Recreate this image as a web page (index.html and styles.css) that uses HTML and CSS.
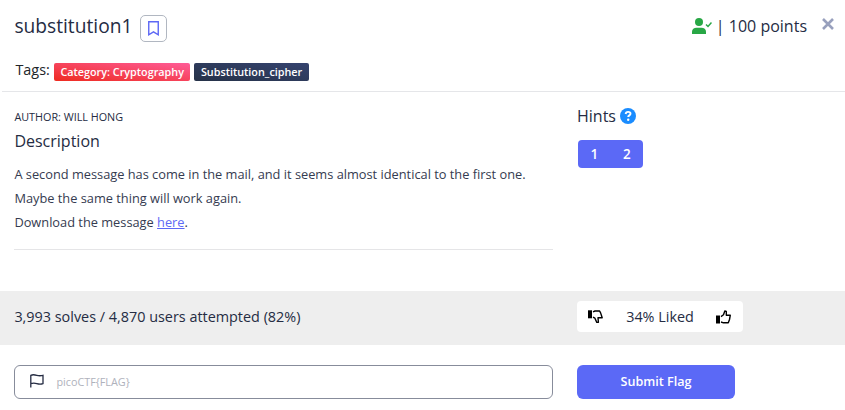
FILE: index.html
```html
<!DOCTYPE html>
<html lang="en">
<head>
<meta charset="utf-8">
<title>substitution1</title>
<link rel="stylesheet" href="styles.css">
</head>
<body>
<main class="modal">
  <header class="header">
    <div class="title-row">
      <h1 class="title">substitution1</h1>
      <button class="bookmark" aria-label="Bookmark">
        <svg width="11" height="15" viewBox="0 0 11 15"><path d="M.75.75h9.5v13L5.5 10.8.75 13.75z" fill="none" stroke="#5d68f5" stroke-width="1.4"/></svg>
      </button>
      <div class="score">
        <svg class="solved" width="20" height="16" viewBox="0 0 20 16"><circle cx="7" cy="4" r="4" fill="#28a745"/><path d="M0 16v-2.2C0 11.200 2 9.700 4.500 9.700h5c2.500 0 4.500 1.500 4.500 4.100V16z" fill="#28a745"/><path d="M14 6.500l2 2 3.500-4" fill="none" stroke="#28a745" stroke-width="1.500"/></svg>
        <span>| 100 points</span>
      </div>
      <button class="close" aria-label="Close">
        <svg width="12" height="12" viewBox="0 0 12 12"><path d="M1 1l10 10M11 1L1 11" stroke="#98a0bd" stroke-width="2.600"/></svg>
      </button>
    </div>
    <div class="tags">
      <span class="tags-label">Tags:</span>
      <span class="tag tag-red">Category: Cryptography</span>
      <span class="tag tag-navy">Substitution_cipher</span>
    </div>
  </header>
  <section class="columns content">
    <div class="details">
      <p class="author">AUTHOR: WILL HONG</p>
      <h2 class="subtitle">Description</h2>
      <p class="description">A second message has come in the mail, and it seems almost identical to the first one. Maybe the same thing will work again.<br>Download the message <a href="#">here</a>.</p>
    </div>
    <div class="hints">
      <h2 class="hints-title">Hints
        <svg width="16" height="16" viewBox="0 0 16 16"><circle cx="8" cy="8" r="8" fill="#1a8cff"/><path d="M5.600 6c.2-1.500 1.100-2.100 2.500-2.100 1.500 0 2.400.8 2.400 1.900 0 1.700-2.300 1.500-2.300 3.200" fill="none" stroke="#fff" stroke-width="1.900"/><circle cx="8.200" cy="11.700" r="1.200" fill="#fff"/></svg>
      </h2>
      <div class="hint-buttons"><button>1</button><button>2</button></div>
    </div>
  </section>
  <section class="columns stats">
    <div class="solves">3,993 solves / 4,870 users attempted (82%)</div>
    <div class="rating">
      <svg width="16" height="14" viewBox="0 0 16 14"><path d="M0 .3h4v8H0z"/><path d="M5 1.800l2-.8h4.600l1 1.900 1.600 4.900H10l.4 4.400-1.600.2-1.900-4.200L5 7.200" fill="none" stroke="#000" stroke-width="1.400" stroke-linejoin="round"/></svg>
      <span>34% Liked</span>
      <svg width="16" height="14" viewBox="0 0 16 14"><path d="M0 5.500h4v8H0z"/><path d="M5 6.600l2.500-1.800L8.800 1l1.500.5v3.700h4l-.8 4.300-1.200 3.300H7.500L5 12" fill="none" stroke="#000" stroke-width="1.400" stroke-linejoin="round"/></svg>
    </div>
  </section>
  <form class="columns submit">
    <label class="flag-field">
      <svg width="14" height="14" viewBox="0 0 14 14"><path d="M.8 13.500V1.300c2-1 4-.6 6 0s4 .6 6.200 0v8.300c-2.200.8-4.200.6-6.200 0s-4-.6-6 0" fill="none" stroke="#252c43" stroke-width="1.300"/></svg>
      <input type="text" placeholder="picoCTF{FLAG}">
    </label>
    <button class="submit-button" type="button">Submit Flag</button>
  </form>
</main>
</body>
</html>
```
FILE: styles.css
```css
* { box-sizing: border-box; }
body { margin: 0; background: #fff; color: #252c43; font-family: "Open Sans", sans-serif; font-size: 16px; }
h1, h2, p { margin: 0; font-weight: 400; }
button { font: inherit; padding: 0; border: 0; background: none; }
svg { display: block; flex: none; }
.modal { width: 845px; height: 410px; overflow: hidden; }
.header { height: 92px; margin-left: 2px; padding: 13px 11px 0 12.400px; border-bottom: 1px solid #e5e6e9; }
.title-row { display: flex; align-items: flex-start; height: 48px; }
.title { font-size: 19.200px; line-height: 26px; }
.bookmark { display: flex; align-items: center; justify-content: center; width: 27px; height: 27px; margin: 2px 0 0 8px; border: 1px solid #b1b7c1; border-radius: 5px; }
.score { display: flex; gap: 4px; margin-left: auto; line-height: 26px; }
.solved { margin-top: 5px; }
.close { margin: 5px 0 0 15px; }
.tags { display: flex; align-items: flex-start; padding-left: 1px; }
.tags-label { width: 38.600px; font-size: 14.400px; line-height: 18px; color: #212529; }
.tag { height: 18px; margin: 2px 4px 0 0; padding: 0 6.480px; border-radius: 2px; color: #fff; font-size: 10.800px; font-weight: 600; line-height: 18px; white-space: nowrap; }
.tag-red { background: linear-gradient(to top right, #ee2b20, #ff5c98); }
.tag-navy { background: linear-gradient(to top right, #263248, #35436f); }
.columns { display: grid; grid-template-columns: 539px 1fr; column-gap: 24px; padding: 0 14px; }
.content { height: 199px; }
.details { height: 158px; padding-top: 16px; border-bottom: 1px solid #e5e5e7; }
.author { padding-left: .4px; font-size: 10.800px; line-height: 18px; }
.subtitle { margin-top: 4px; padding-left: .4px; font-size: 16px; line-height: 22px; }
.description { margin-top: 10px; padding-left: .4px; font-size: 12.800px; line-height: 24px; color: #353b50; }
.description a { color: #5d68f5; }
.hints { padding-top: 13px; }
.hints-title { display: flex; align-items: center; gap: 4px; font-size: 16px; line-height: 23px; }
.hints-title svg { margin-top: -1px; }
.hint-buttons { display: flex; width: 65px; height: 28px; margin: 12px 0 0 1px; border-radius: 4px; background: #5b69f6; }
.hint-buttons button { flex: 1; padding-bottom: 1px; color: #fff; font-size: 13.500px; font-weight: 600; }
.stats { height: 54px; align-items: center; background: #eee; font-size: 14.400px; }
.solves { margin-top: -3px; padding-left: .4px; }
.rating { display: flex; align-items: center; justify-content: space-between; width: 166px; height: 31px; margin-top: -3px; padding: 0 11px; border-radius: 4px; background: #fff; }
.submit { padding-top: 20px; }
.flag-field { display: flex; align-items: center; height: 34px; padding-left: 15px; border: 1px solid #878c9b; border-radius: 6px; }
.flag-field svg { margin-top: -2px; }
.flag-field input { width: 450px; margin: -2px 0 0 12.400px; padding: 0; border: 0; outline: 0; background: none; font: 10.800px "Open Sans", sans-serif; }
.flag-field input::placeholder { color: #afb2bc; }
.submit-button { width: 158px; height: 34px; padding-bottom: 2px; border-radius: 6px; background: #5b69f6; color: #fff; font-size: 12.600px; font-weight: 600; }
```
